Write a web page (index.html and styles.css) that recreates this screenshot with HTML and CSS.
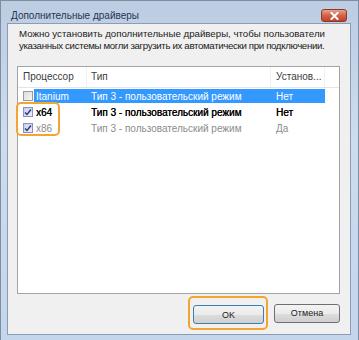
FILE: index.html
```html
<!DOCTYPE html>
<html lang="ru">
<head>
  <meta charset="UTF-8">
  <title>Дополнительные драйверы</title>
  <link rel="stylesheet" href="styles.css">
</head>
<body>

  <div class="window">
    <!-- заголовок окна -->
    <div class="titlebar">
      <span class="title">Дополнительные драйверы</span>
      <span class="close">
        <svg width="9" height="8" viewBox="0 0 9 8">
          <path d="M1.5 1 L7.5 7 M7.5 1 L1.5 7" stroke="#fff" stroke-width="2" stroke-linecap="square"/>
        </svg>
      </span>
    </div>

    <div class="client">
      <p class="desc">
        <span>Можно установить дополнительные драйверы, чтобы пользователи</span>
        <span class="tight">указанных системы могли загрузить их автоматически при подключении.</span>
      </p>

      <div class="list">
        <div class="head">
          <div>Процессор</div>
          <div>Тип</div>
          <div class="last">Установ...</div>
        </div>

        <div class="row">
          <span class="chk"></span>
          <div class="cells selected">
            <div>Itanium</div>
            <div>Тип 3 - пользовательский режим</div>
            <div>Нет</div>
          </div>
        </div>
        <div class="row">
          <span class="chk on"><svg width="8" height="8" viewBox="0 0 8 8"><path d="M1 4.5 L3 6.5 L7 1.5" fill="none" stroke="#2a3f7a" stroke-width="1.5"/></svg></span>
          <div class="cells strong">
            <div>x64</div>
            <div>Тип 3 - пользовательский режим</div>
            <div>Нет</div>
          </div>
        </div>
        <div class="row">
          <span class="chk on"><svg width="8" height="8" viewBox="0 0 8 8"><path d="M1 4.5 L3 6.5 L7 1.5" fill="none" stroke="#2a3f7a" stroke-width="1.5"/></svg></span>
          <div class="cells muted">
            <div>x86</div>
            <div>Тип 3 - пользовательский режим</div>
            <div>Да</div>
          </div>
        </div>

        <!-- выделение флажков -->
        <div class="mark"></div>
      </div>

      <div class="buttons">
        <div class="focus"><button>OK</button></div>
        <button>Отмена</button>
      </div>
    </div>
  </div>

</body>
</html>
```

FILE: styles.css
```css
body {
  margin: 0;
  font-family: "Liberation Sans", Arial, sans-serif;
  font-size: 10px;
  color: #1a1a1a;
  background: #fff;
}
.window {
  width: 359px;
  height: 340px;
  box-sizing: border-box;
  padding: 0 7px 5px 6px;
  background: linear-gradient(#bccde2, #cddcee 40%, #c4d6ec);
  border: 1px solid #7d8ea3;
  border-bottom: none;
  display: flex;
  flex-direction: column;
}
.titlebar {
  height: 22px;
  display: flex;
  align-items: center;
  justify-content: space-between;
  padding: 0 4px 0 4px;
}
.title {
  color: #1f3553;
  font-size: 10px;
  margin-top: 7px;
}
.close {
  width: 24px;
  height: 11px;
  margin-top: 7px;
  border: 1px solid #8a3a2c;
  border-radius: 3px;
  background: linear-gradient(#e9a28c, #d4614a 50%, #c34127);
  display: flex;
  align-items: center;
  justify-content: center;
}
.client {
  flex: 1;
  background: #f0f0f0;
  border: 1px solid #8c9db3;
  display: flex;
  flex-direction: column;
  padding: 0 10px 0 9px;
}
.desc {
  margin: 4px 0 0 2px;
  line-height: 12px;
  font-size: 9.7px;
  white-space: nowrap;
  display: flex;
  flex-direction: column;
}
.desc .tight {
  letter-spacing: -0.35px;
}
.list {
  position: relative;
  margin-top: 14px;
  height: 228px;
  box-sizing: border-box;
  background: #fff;
  border: 1px solid #a3a3a3;
}
.head {
  display: grid;
  grid-template-columns: 69px 184px 54px;
  height: 20px;
  align-items: center;
  border-bottom: 1px solid #e5e5e5;
  color: #3c3c3c;
}
.head div {
  padding-left: 5px;
  line-height: 20px;
  border-right: 1px solid #f0f0f0;
}
.head div:nth-child(2) {
  padding-left: 4px;
}
.row {
  display: flex;
  align-items: center;
  height: 16px;
}
.chk {
  width: 8px;
  height: 8px;
  margin: 0 1px 0 5px;
  border: 1px solid #9a9a9a;
  background: linear-gradient(135deg, #dcdcdc, #f6f6f6);
  display: flex;
  align-items: center;
  justify-content: center;
}
.chk.on {
  border-color: #8e8fbf;
  background: linear-gradient(135deg, #c9cbef, #eef0fb);
}
.cells {
  display: grid;
  grid-template-columns: 53px 184px 54px;
  height: 14px;
  align-items: center;
}
.cells div {
  padding-left: 2px;
}
.cells div:nth-child(2) {
  padding-left: 4px;
}
.cells div:nth-child(3) {
  padding-left: 5px;
}
.selected {
  background: #3399ff;
  color: #fff;
}
.strong {
  color: #000;
  text-shadow: 0.2px 0 0 #000;
}
.muted {
  color: #8c8c8c;
}
.mark {
  position: absolute;
  left: -2px;
  top: 35px;
  width: 40px;
  height: 30px;
  border: 2px solid #f3a433;
  border-radius: 5px;
}
.buttons {
  display: flex;
  justify-content: flex-end;
  align-items: center;
  gap: 6px;
  margin-top: 2px;
}
.focus {
  border: 2px solid #f3a433;
  border-radius: 5px;
  padding: 7px 2px 4px 3px;
}
button {
  font-family: "Liberation Sans", Arial, sans-serif;
  font-size: 9px;
  color: #1a1a1a;
  height: 19px;
  width: 66px;
  border: 1px solid #707070;
  border-radius: 3px;
  background: linear-gradient(#f3f3f3, #ebebeb 50%, #dddddd 51%, #cfcfcf);
  padding: 0;
}
.focus button {
  width: 71px;
  border-color: #3c7fb1;
}
```
